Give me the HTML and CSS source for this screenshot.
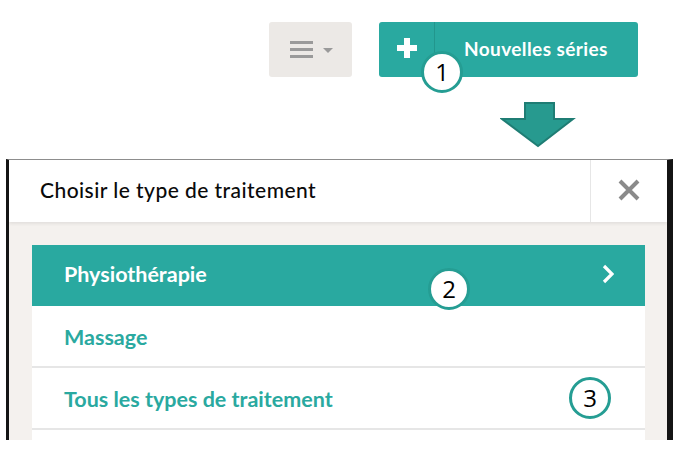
FILE: index.html
```html
<!DOCTYPE html>
<html lang="fr">
<head>
<meta charset="utf-8">
<title>Nouvelles séries</title>
<link rel="stylesheet" href="styles.css">
</head>
<body>
<div class="toolbar">
  <button class="menu-btn" type="button" aria-label="Menu">
    <svg class="burger" width="23" height="17" viewBox="0 0 23 17"><rect x="0" y="0" width="23" height="3" fill="#9a9a9a"/><rect x="0" y="7" width="23" height="3" fill="#9a9a9a"/><rect x="0" y="14" width="23" height="3" fill="#9a9a9a"/></svg>
    <svg class="caret" width="10" height="5" viewBox="0 0 10 5"><polygon points="0,0 10,0 5,5" fill="#9a9a9a"/></svg>
  </button>
  <div class="new-btn">
    <span class="plus-part">
      <svg width="20" height="20" viewBox="0 0 20 20"><rect x="7" y="0" width="6" height="20" fill="#fff"/><rect x="0" y="7" width="20" height="6" fill="#fff"/></svg>
    </span>
    <span class="label-part">Nouvelles séries</span>
    <span class="badge badge-1">1</span>
  </div>
</div>
<div class="arrow-row">
  <svg width="78" height="46" viewBox="0 0 78 46"><polygon points="25,1 54,1 54,17 73,17 38,44 2,17 25,17" fill="#279a8f" stroke="#1f7d74" stroke-width="2" stroke-linejoin="miter"/></svg>
</div>
<div class="panel">
  <div class="panel-head">
    <div class="panel-title">Choisir le type de traitement</div>
    <div class="panel-close">
      <svg width="22" height="22" viewBox="0 0 22 22"><path d="M2 2 L20 20 M20 2 L2 20" stroke="#8a8a8a" stroke-width="4" stroke-linecap="butt"/></svg>
    </div>
  </div>
  <div class="panel-body">
    <ul class="type-list">
      <li class="type-item active">
        <span>Physiothérapie</span>
        <svg class="chev" width="12" height="20" viewBox="0 0 12 20"><path d="M2 2 L10 10 L2 18" fill="none" stroke="#fff" stroke-width="3.2"/></svg>
        <span class="badge badge-2">2</span>
      </li>
      <li class="type-item"><span>Massage</span></li>
      <li class="type-item">
        <span>Tous les types de traitement</span>
        <span class="badge badge-3">3</span>
      </li>
      <li class="type-item"><span></span></li>
    </ul>
  </div>
</div>
</body>
</html>
```
FILE: styles.css
```css
html, body {
  margin: 0;
  padding: 0;
  background: #fff;
  overflow: hidden;
}
body {
  width: 685px;
  height: 450px;
  font-family: Lato, "Open Sans", sans-serif;
}
.toolbar {
  display: flex;
  justify-content: flex-end;
  gap: 27px;
  padding: 22px 47px 0 0;
  height: 55px;
}
.menu-btn {
  width: 83px;
  height: 55px;
  border: 0;
  border-radius: 3px;
  background: #ece9e6;
  display: flex;
  align-items: center;
  justify-content: center;
  gap: 10px;
  padding: 0 0 0 1px;
}
.burger { display: block; }
.caret { display: block; margin-top: 1px; }
.new-btn {
  position: relative;
  width: 259px;
  height: 55px;
  border-radius: 3px;
  background: #29a9a0;
  display: flex;
  color: #fff;
}
.plus-part {
  width: 56px;
  display: flex;
  align-items: center;
  justify-content: center;
  border-right: 1px solid #22968d;
  padding-bottom: 3px;
  box-sizing: border-box;
}
.label-part {
  flex: 1;
  display: flex;
  align-items: center;
  padding-left: 29px;
  font-weight: 700;
  font-size: 19px;
  letter-spacing: 0.4px;
  padding-bottom: 3px;
}
.badge {
  position: absolute;
  width: 36px;
  height: 36px;
  border: 3px solid #259d93;
  border-radius: 50%;
  background: #fff;
  color: #000;
  font-family: "Open Sans", sans-serif;
  font-weight: 400;
  font-size: 24px;
  line-height: 36px;
  text-align: center;
  letter-spacing: 0;
}
.badge-1 { left: 42px; top: 29px; }
.badge-2 { left: 396px; top: 23px; }
.badge-3 { left: 537px; top: 9px; }
.arrow-row {
  height: 82px;
  padding: 25px 0 0 500px;
  box-sizing: border-box;
}
.arrow-row svg { display: block; }
.panel {
  margin-left: 6px;
  width: 667px;
  height: 281px;
  box-sizing: border-box;
  border-top: 1px solid #8d8d8d;
  border-left: 3px solid #141414;
  border-right: 6px solid #141414;
  overflow: hidden;
  background: #f4f1ee;
}
.panel-head {
  height: 62px;
  background: #fff;
  display: flex;
  box-shadow: 0 2px 3px rgba(0,0,0,0.07);
  position: relative;
}
.panel-title {
  flex: 1;
  display: flex;
  align-items: center;
  padding-left: 31px;
  font-size: 21px;
  font-weight: 500;
  color: #0a0a0a;
  letter-spacing: 0.45px;
  padding-bottom: 3px;
}
.panel-close {
  width: 76px;
  border-left: 1px solid #e6e6e6;
  display: flex;
  align-items: center;
  justify-content: center;
  padding-bottom: 2px;
}
.panel-body {
  padding: 23px 22px 0 23px;
}
.type-list {
  list-style: none;
  margin: 0;
  padding: 0;
  background: #fff;
}
.type-item {
  position: relative;
  height: 58px;
  border-bottom: 2px solid #e6e6e6;
  display: flex;
  align-items: center;
  justify-content: space-between;
  padding: 2px 32px 0;
  font-size: 21.5px;
  font-weight: 700;
  color: #2aa9a0;
  letter-spacing: 0;
}
.type-item.active {
  background: #29a9a0;
  color: #fff;
  height: 57px;
  padding-top: 0;
  padding-bottom: 4px;
  border-bottom: 0;
  padding-right: 31px;
}
.chev { display: block; }
```
